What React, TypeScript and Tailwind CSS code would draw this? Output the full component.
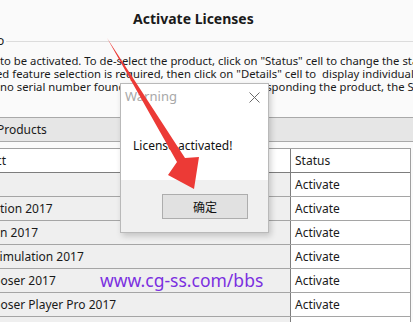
import React from "react";

const ROWS = [
  { name: "", ml: "ml-0" },
  { name: "tion 2017", ml: "ml-0" },
  { name: "n 2017", ml: "ml-0" },
  { name: "Simulation 2017", ml: "-ml-[7px]" },
  { name: "Composer 2017", ml: "-ml-[33px]" },
  { name: "Composer Player Pro 2017", ml: "-ml-[33px]" },
  { name: "", ml: "ml-0" },
];

function Arrow() {
  return (
    <svg className="absolute left-0 top-0 pointer-events-none" width="413" height="322" viewBox="0 0 413 322">
      <polygon points="107,38 185,158 199,157 194,189 168,175 177,162" fill="#ec3a36" />
    </svg>
  );
}

function WarningDialog() {
  return (
    <div className="absolute left-[120px] top-[83px] w-[149px] h-[150px] bg-white border border-[#b9b9b9] shadow-[2px_3px_6px_rgba(0,0,0,0.18)] flex flex-col">
      <div className="h-[26px] flex items-center justify-between pl-[4px] pr-[8px]">
        <span className="text-[13px] text-[#a8a8a8]">Warning</span>
        <svg width="11" height="11" viewBox="0 0 11 11">
          <path d="M0.5 0.5 L10.5 10.5 M10.5 0.5 L0.5 10.5" stroke="#6a6a6a" strokeWidth="1" />
        </svg>
      </div>
      <div className="h-[70px] pl-[12px] pt-[27px] text-[12px] text-[#111]">License activated!</div>
      <div className="flex-1 bg-[#f0f0f0] pt-[14px] pl-[41px]">
        <div className="w-[86px] h-[25px] bg-[#e1e1e1] border border-[#adadad] flex items-center justify-center text-[12px] text-[#111] font-['Noto_Sans_CJK_SC',sans-serif]">
          确定
        </div>
      </div>
    </div>
  );
}

export default function App() {
  return (
    <div className="relative w-[413px] h-[322px] overflow-hidden bg-[#fafafa] text-[#1a1a1a] font-['Noto_Sans','Open_Sans',sans-serif]">
      <div className="h-[32px] pl-[133px] pt-[9px] text-[14px] font-bold leading-[20px]">Activate Licenses</div>

      <div className="flex items-center h-[18px] text-[12px]">
        <span className="-ml-[3px] leading-[14px]">o</span>
        <div className="flex-1 border-t border-[#dcdcdc] ml-[2px]" />
      </div>

      <div className="pt-[4px] text-[11.3px] leading-[13px] whitespace-nowrap">
        <div>to be activated. To de-select the product, click on "Status" cell to change the status</div>
        <div className="-ml-[4px]">ed feature selection is required, then click on "Details" cell to&nbsp; display individual</div>
        <div>no serial number found in Windows Registry corresponding the product, the Status</div>
      </div>

      <div className="mt-[24px] h-[25px] bg-[#e6e6e6] border-y border-[#a9a9a9] flex items-center text-[12px]">
        <span className="-ml-[3px]">Products</span>
      </div>

      <div className="mt-[6px] w-[411px] border-t border-r border-[#a0a0a0] text-[12px]">
        <div className="flex h-[24px] border-b border-[#7d7d7d] bg-white">
          <div className="w-[291px] border-r border-[#7d7d7d] flex items-center">
            <span className="-ml-[4px]">ct</span>
          </div>
          <div className="flex-1 flex items-center pl-[4px]">Status</div>
        </div>
        {ROWS.map((r, i) => (
          <div key={i} className="flex h-[24px] border-b border-[#a5a5a5]">
            <div className="w-[291px] bg-[#efefef] border-r border-[#7d7d7d] flex items-center overflow-hidden whitespace-nowrap">
              <span className={r.ml}>{r.name}</span>
            </div>
            <div className="flex-1 bg-white flex items-center pl-[4px]">Activate</div>
          </div>
        ))}
      </div>

      <div className="absolute left-[100px] top-[267px] text-[17.5px] text-[#7b2fe0] font-['Noto_Sans',sans-serif] leading-[26px]">
        www.cg-ss.com/bbs
      </div>

      <WarningDialog />
      <Arrow />
    </div>
  );
}
